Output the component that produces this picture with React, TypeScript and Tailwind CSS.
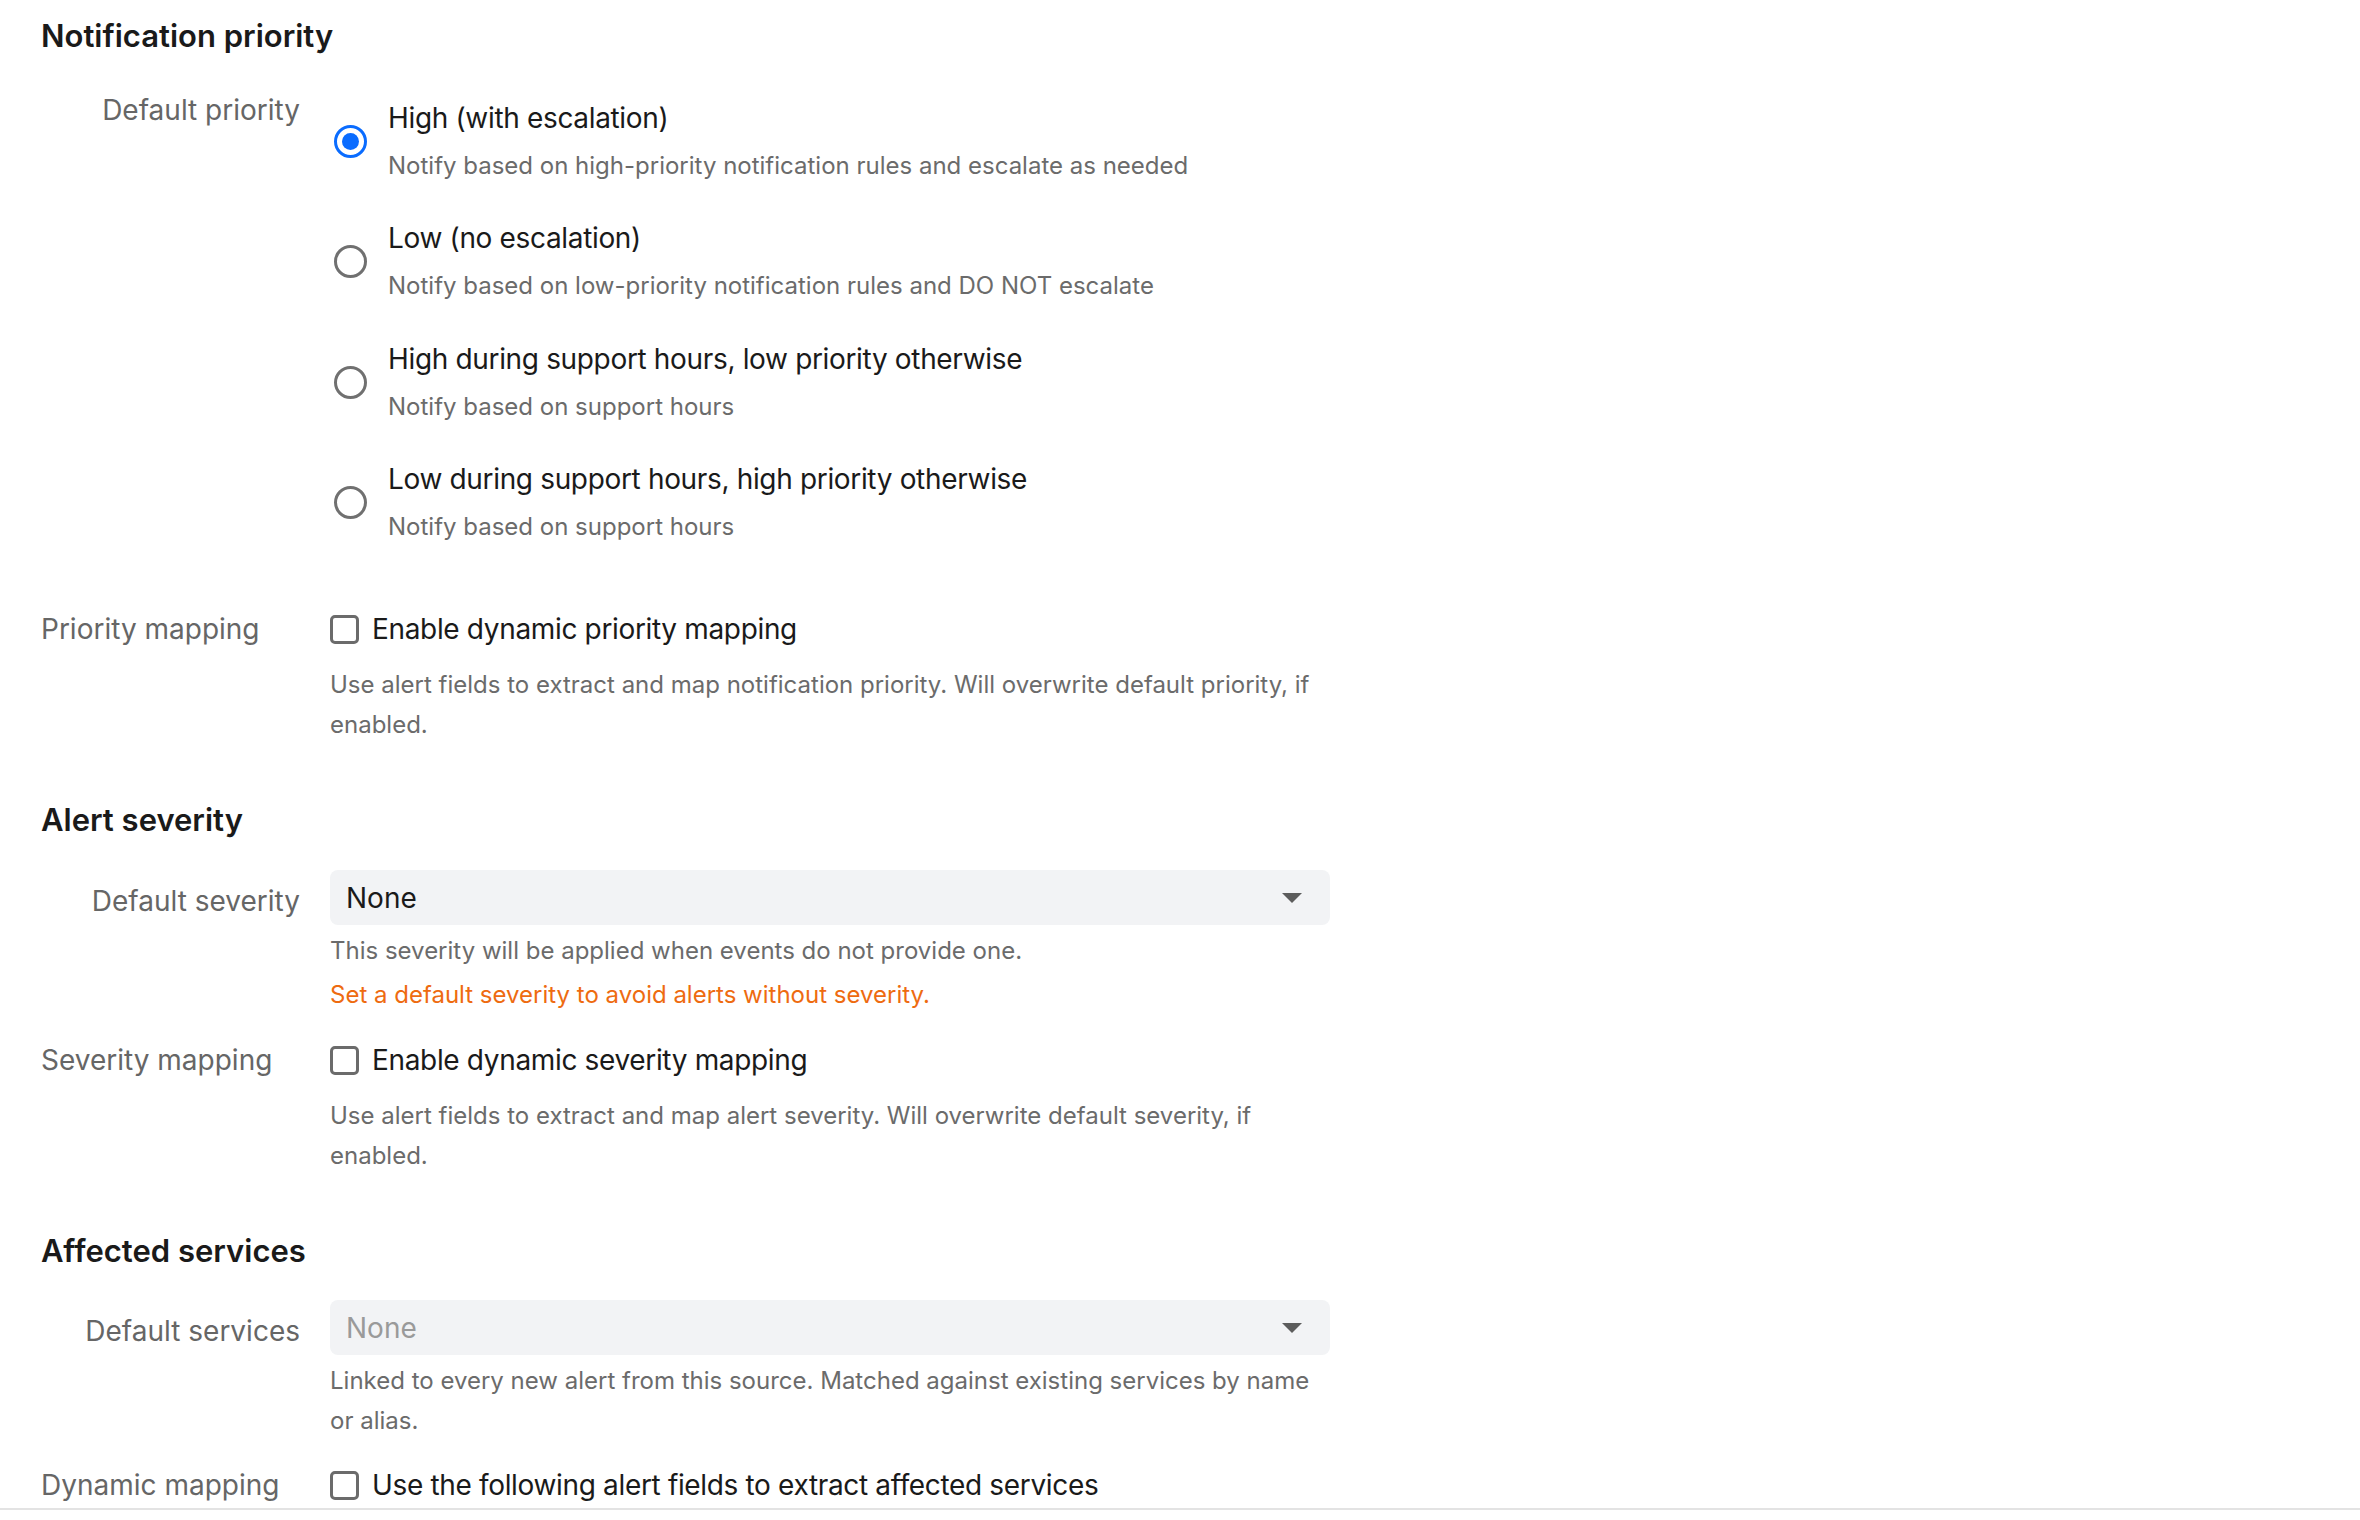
import React from 'react';

const Radio = ({ checked }: { checked?: boolean }) =>
  checked ? (
    <span className="ml-[4px] flex h-[33px] w-[33px] shrink-0 items-center justify-center rounded-full border-[3.5px] border-[#0a6cff]">
      <span className="h-[17px] w-[17px] rounded-full bg-[#0a6cff]" />
    </span>
  ) : (
    <span className="ml-[4px] h-[33px] w-[33px] shrink-0 rounded-full border-[3px] border-[#707070]" />
  );

const Checkbox = () => (
  <span className="h-[29px] w-[29px] shrink-0 rounded-[5px] border-[3px] border-[#6b6b6b]" />
);

const Caret = () => (
  <svg width="20" height="10" viewBox="0 0 20 10" className="shrink-0">
    <path d="M0 0 L20 0 L10 10 Z" fill="#5c5c5c" />
  </svg>
);

const options = [
  { title: 'High (with escalation)', sub: 'Notify based on high-priority notification rules and escalate as needed', checked: true },
  { title: 'Low (no escalation)', sub: 'Notify based on low-priority notification rules and DO NOT escalate' },
  { title: 'High during support hours, low priority otherwise', sub: 'Notify based on support hours' },
  { title: 'Low during support hours, high priority otherwise', sub: 'Notify based on support hours' },
];

const SectionTitle = ({ children, className = '' }: { children: React.ReactNode; className?: string }) => (
  <h2 className={`text-[31px] leading-[40px] font-semibold text-[#1a1a1a] ${className}`}>{children}</h2>
);

const CheckRow = ({ label, text, className = '' }: { label: string; text: string; className?: string }) => (
  <div className={`flex ${className}`}>
    <div className="w-[259px] shrink-0 text-[28px] leading-[40px] text-[#666]">{label}</div>
    <div className="ml-[30px] flex h-[40px] items-center gap-[13px]">
      <Checkbox />
      <span className="text-[28px] leading-[40px] tracking-[-0.34px] text-[#1a1a1a]">{text}</span>
    </div>
  </div>
);

const Help = ({ children, className = '' }: { children: React.ReactNode; className?: string }) => (
  <p className={`ml-[289px] w-[1000px] text-[24px] leading-[40px] text-[#6b6b6b] ${className}`}>{children}</p>
);

const SelectRow = ({ label, value, placeholder }: { label: string; value: string; placeholder?: boolean }) => (
  <div className="flex">
    <div className="w-[259px] shrink-0 pt-[11px] text-right text-[28px] leading-[40px] text-[#666]">{label}</div>
    <div className="ml-[30px] flex h-[55px] w-[1000px] items-center justify-between rounded-[8px] bg-[#f2f3f5] pl-[16px] pr-[28px]">
      <span className={`text-[28px] leading-[40px] ${placeholder ? 'text-[#9a9a9a]' : 'text-[#1a1a1a]'}`}>{value}</span>
      <Caret />
    </div>
  </div>
);

export default function App() {
  return (
    <div className="min-h-screen bg-white font-['Inter','Liberation_Sans',sans-serif] antialiased">
      <div className="border-b-[2px] border-[#e3e3e3] pb-[3px] pl-[41px] pt-[16px]">
        <SectionTitle>Notification priority</SectionTitle>

        <div className="mt-[41px] flex">
          <div className="w-[259px] shrink-0 text-right text-[28px] leading-[26px] text-[#666]">Default priority</div>
          <div className="ml-[30px] flex flex-col gap-[31.4px]">
            {options.map((o) => (
              <div key={o.title} className="flex items-center gap-[21px]">
                <Radio checked={o.checked} />
                <div>
                  <div className="pt-[1px] text-[28px] leading-[40px] tracking-[-0.34px] text-[#1a1a1a]">{o.title}</div>
                  <div className="mt-[8px] text-[24px] leading-[40px] text-[#6b6b6b]">{o.sub}</div>
                </div>
              </div>
            ))}
          </div>
        </div>

        <CheckRow className="mt-[62px]" label="Priority mapping" text="Enable dynamic priority mapping" />
        <Help className="mt-[16px]">
          Use alert fields to extract and map notification priority. Will overwrite default priority, if enabled.
        </Help>

        <SectionTitle className="mt-[55px]">Alert severity</SectionTitle>
        <div className="mt-[30px]">
          <SelectRow label="Default severity" value="None" />
        </div>
        <Help className="mt-[6px]">This severity will be applied when events do not provide one.</Help>
        <Help className="mt-[4px] text-[#ee6b10]">Set a default severity to avoid alerts without severity.</Help>

        <CheckRow className="mt-[25px]" label="Severity mapping" text="Enable dynamic severity mapping" />
        <Help className="mt-[16px]">
          Use alert fields to extract and map alert severity. Will overwrite default severity, if enabled.
        </Help>

        <SectionTitle className="mt-[55px]">Affected services</SectionTitle>
        <div className="mt-[29px]">
          <SelectRow label="Default services" value="None" placeholder />
        </div>
        <Help className="mt-[6px]">
          Linked to every new alert from this source. Matched against existing services by name or alias.
        </Help>

        <CheckRow className="mt-[24px]" label="Dynamic mapping" text="Use the following alert fields to extract affected services" />
      </div>
    </div>
  );
}
